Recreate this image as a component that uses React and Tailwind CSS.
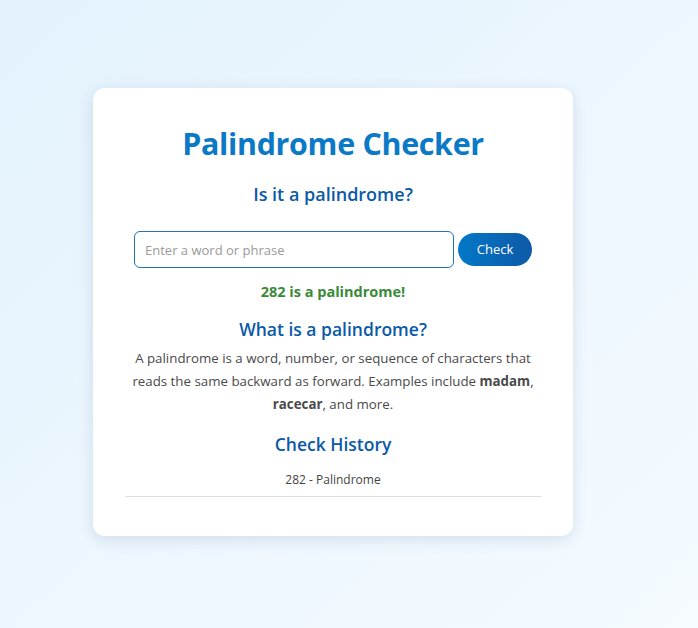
export default function App() {
  return (
    <div
      className="min-h-screen w-full bg-gradient-to-br from-[#e3f2fd] to-[#f5fbff] pt-[88px] pl-[93px]"
      style={{ fontFamily: '"Open Sans", "Noto Sans", sans-serif' }}
    >
      <div className="w-[480px] rounded-[12px] bg-white px-8 pt-[37px] pb-[39px] shadow-[0_4px_16px_rgba(0,40,80,0.12)] flex flex-col items-center">
        <h1 className="text-[30.4px] leading-[38px] font-bold text-[#0a79c6] tracking-[-0.3px]">Palindrome Checker</h1>
        <h2 className="mt-[16px] text-[18px] leading-[30px] font-semibold text-[#0b5aa6]">Is it a palindrome?</h2>
        <div className="mt-[22px] flex items-center gap-1">
          <input
            className="w-[320px] h-[37px] rounded-[6px] border border-[#1f73b7] px-[10px] text-[13px] text-[#333] placeholder:text-[#9a9a9a] outline-none"
            placeholder="Enter a word or phrase"
          />
          <button className="h-[33px] w-[74px] rounded-full bg-gradient-to-r from-[#0277c7] to-[#0d5aa7] text-[13px] text-white">Check</button>
        </div>
        <p className="mt-[13px] text-[14.5px] leading-[22px] font-bold text-[#3a8a3a]">282 is a palindrome!</p>
        <h2 className="mt-[11px] text-[17.5px] leading-[30px] font-semibold text-[#0b5aa6]">What is a palindrome?</h2>
        <p className="mt-[3px] w-[410px] text-center text-[13.3px] leading-[23px] text-[#4a4a4a]">
          A palindrome is a word, number, or sequence of characters that reads the same backward as forward. Examples include <b>madam</b>, <b>racecar</b>, and more.
        </p>
        <h2 className="mt-[13px] text-[17.5px] leading-[30px] font-semibold text-[#0b5aa6]">Check History</h2>
        <div className="mt-[11px] w-full border-b border-[#dedede] pb-[6px] text-center text-[12px] leading-[20px] text-[#444]">282 - Palindrome</div>
      </div>
    </div>
  );
}
